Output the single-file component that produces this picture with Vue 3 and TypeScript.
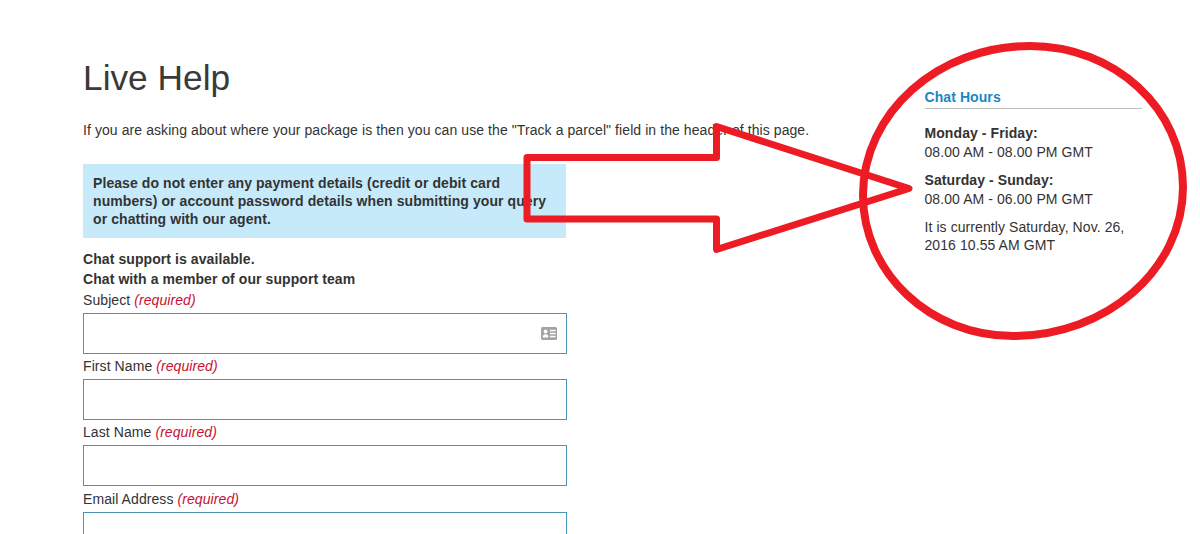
<script setup lang="ts">
const fields: string[] = ['First Name', 'Last Name', 'Email Address']
</script>

<template>
  <div class="page">
    <main class="main">
      <h1 class="title">Live Help</h1>
      <p class="intro">If you are asking about where your package is then you can use the "Track a parcel" field in the header of this page.</p>
      <div class="notice">Please do not enter any payment details (credit or debit card numbers) or account password details when submitting your query or chatting with our agent.</div>
      <p class="status">Chat support is available.<br />Chat with a member of our support team</p>
      <form class="form">
        <div class="field">
          <label class="label">Subject <em>(required)</em></label>
          <div class="input">
            <svg class="card" viewBox="0 0 16 13" width="16" height="13" aria-hidden="true">
              <rect width="16" height="13" rx="1.5" fill="#a3a3a3" />
              <circle cx="4.6" cy="4.5" r="1.9" fill="#fff" />
              <path d="M1.7 10.6c0-2.2 1.2-3.3 2.9-3.3s2.9 1.1 2.9 3.3z" fill="#fff" />
              <rect x="9" y="2.8" width="5.6" height="1.5" fill="#fff" />
              <rect x="9" y="5.8" width="5.6" height="1.5" fill="#fff" />
              <rect x="9" y="8.8" width="5.6" height="1.5" fill="#fff" />
            </svg>
          </div>
        </div>
        <div v-for="f in fields" :key="f" class="field">
          <label class="label">{{ f }} <em>(required)</em></label>
          <div class="input"></div>
        </div>
      </form>
    </main>
    <aside class="side">
      <h2 class="side-title">Chat Hours</h2>
      <p class="hours"><b>Monday - Friday:</b><br />08.00 AM - 08.00 PM GMT</p>
      <p class="hours"><b>Saturday - Sunday:</b><br />08.00 AM - 06.00 PM GMT</p>
      <p class="hours now">It is currently Saturday, Nov. 26, 2016 10.55 AM GMT</p>
    </aside>
    <svg class="markup" viewBox="0 0 1200 534" width="1200" height="534" aria-hidden="true">
      <path d="M527 157.500H716.500V126.500L909 188.500L716.500 249.500V219H527Z" fill="none" stroke="#ed1c24" stroke-width="7" stroke-linejoin="round" />
      <path d="M1030 46C1115 46 1183 109 1183 187C1183 269 1107 336 1013 336C930 336 863 273 863 195C863 113 938 46 1030 46Z" fill="none" stroke="#ed1c24" stroke-width="8" />
    </svg>
  </div>
</template>

<style>
html, body { margin: 0; background: #fff; }
</style>

<style scoped>
.page {
  position: relative;
  display: flex;
  width: 1200px;
  height: 534px;
  overflow: hidden;
  background: #fff;
  color: #333;
  font-family: "Liberation Sans", Arial, sans-serif;
  font-size: 14px;
  letter-spacing: 0.08px;
}
.main { width: 484px; margin-left: 83px; flex: none; overflow: visible; }
.title {
  margin: 57px 0 0;
  font-size: 35.300px;
  font-weight: 400;
  line-height: 42px;
  letter-spacing: 0;
  white-space: nowrap;
  color: #3a3a3a;
}
.intro { margin: 21px 0 0; line-height: 20px; white-space: nowrap; }
.notice {
  box-sizing: border-box;
  width: 483px;
  margin-top: 24px;
  padding: 10px;
  background: #c7eafb;
  font-weight: 700;
  line-height: 18px;
}
.status { margin: 11px 0 0; font-weight: 700; line-height: 20px; }
.form { display: flex; flex-direction: column; gap: 2.200px; margin-top: 1px; }
.label { display: block; line-height: 20px; }
.label em { color: #c8102e; }
.input {
  box-sizing: border-box;
  position: relative;
  display: flex;
  align-items: center;
  justify-content: flex-end;
  width: 484px;
  height: 41px;
  margin-top: 3px;
  padding-right: 9px;
  border: 1px solid #4a94b4;
  background: #fff;
}
.side { width: 217px; margin-left: 357.500px; margin-top: 88px; flex: none; }
.side-title {
  margin: 0 0 15px;
  padding-bottom: 2px;
  border-bottom: 1px solid #bdbdbd;
  color: #1b87c0;
  font-size: 14px;
  font-weight: 700;
  line-height: 18px;
}
.hours { margin: 0 0 9px; line-height: 19px; }
.hours.now { line-height: 18px; }
.hours b { font-weight: 700; }
.markup { position: absolute; left: 0; top: 0; pointer-events: none; }
</style>
